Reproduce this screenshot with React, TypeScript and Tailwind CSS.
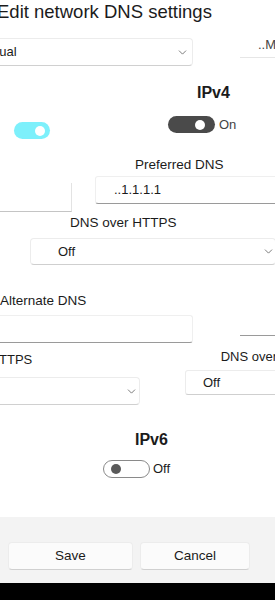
import { ChevronDown } from 'lucide-react'

function Chevron() {
  return <ChevronDown className="h-[13px] w-[13px] text-[#5f5f5f]" strokeWidth={1.5} />
}

export default function App() {
  return (
    <div className="h-[600px] w-[275px] overflow-hidden bg-white text-[#1b1b1b] [font-family:'Liberation_Sans',Arial,sans-serif]">
      {/* title */}
      <div className="h-[30px] -ml-[3px] whitespace-nowrap text-[18.5px] leading-[24px]">Edit network DNS settings</div>

      {/* mode dropdown */}
      <div className="flex h-[42px] items-start">
        <div className="-ml-[40px] mt-[8px] flex h-[28px] w-[233px] shrink-0 items-center rounded-[4px] border border-[#ececec] border-b-[#d0d0d0] pl-[13px] pr-[3px] text-[13px]">
          <span>Manual</span>
          <span className="ml-auto"><Chevron /></span>
        </div>
        <div className="ml-[47px] mt-[3px] flex h-[25px] w-[45px] shrink-0 items-center border-b border-[#e6e6e6] pl-[18px] text-[13px] text-[#444]">..M</div>
      </div>

      {/* IPv4 */}
      <div className="h-[33px] pl-[197px] pt-[11px] text-[16px] font-bold leading-[19px]">IPv4</div>

      {/* toggles */}
      <div className="flex h-[40px] items-start">
        <div className="ml-[14px] mt-[17px] flex h-[17px] w-[36px] shrink-0 items-center justify-end rounded-full bg-[#7df0fb] pr-[5px]">
          <div className="h-[10px] w-[10px] rounded-full bg-white" />
        </div>
        <div className="ml-[118px] mt-[11px] flex h-[17px] w-[47px] shrink-0 items-center justify-end rounded-full bg-[#4a4a4a] pr-[10px]">
          <div className="h-[10px] w-[10px] rounded-full bg-white" />
        </div>
        <span className="ml-[4px] mt-[11px] text-[13px] leading-[17px] text-[#444]">On</span>
      </div>

      {/* preferred */}
      <div className="h-[30px] pl-[135px] pt-[12px] text-[13.5px] leading-[16px]">Preferred DNS</div>
      <div className="flex h-[38px] items-start">
        <div className="mt-[8px] h-[29px] w-[72px] shrink-0 border-r border-b border-[#e3e3e3] border-b-[#c4c4c4]" />
        <div className="ml-[23px] mt-[1px] flex h-[28px] w-[200px] shrink-0 items-center rounded-[3px] border border-[#efefef] border-b-[#9a9a9a] pl-[18px] text-[13px]">..1.1.1.1</div>
      </div>
      <div className="h-[19px] pl-[70px] pt-[2px] text-[13.5px] leading-[16px]">DNS over HTTPS</div>
      <div className="flex h-[40px] items-start">
        <div className="ml-[30px] mt-[6px] flex h-[27px] w-[246px] shrink-0 items-center rounded-[4px] border border-[#ececec] border-b-[#cfcfcf] pl-[27px] text-[13px]">
          <span>Off</span>
          <span className="ml-auto"><Chevron /></span>
        </div>
      </div>

      {/* alternate */}
      <div className="h-[38px] pt-[21px] text-[13.5px] leading-[16px]">Alternate DNS</div>
      <div className="flex h-[38px] items-start">
        <div className="-ml-[10px] mt-[5px] h-[28px] w-[203px] shrink-0 rounded-[3px] border border-[#efefef] border-b-[#9a9a9a]" />
        <div className="ml-[47px] mt-[10px] h-[16px] w-[40px] shrink-0 border-b border-[#9a9a9a]" />
      </div>
      <div className="flex h-[17px] items-start text-[13px] leading-[15px]">
        <span className="-ml-[1px] mt-[4px]">TTPS</span>
        <span className="ml-auto -mr-[2px] mt-[1px] whitespace-nowrap">DNS over</span>
      </div>
      <div className="flex h-[45px] items-start">
        <div className="-ml-[20px] mt-[12px] flex h-[28px] w-[160px] shrink-0 items-center justify-end rounded-[4px] border border-[#ececec] border-b-[#d0d0d0] pr-[1px]">
          <Chevron />
        </div>
        <div className="ml-[45px] mt-[5px] flex h-[25px] w-[95px] shrink-0 items-center rounded-[3px] border border-[#ececec] border-b-[#cfcfcf] pl-[17px] text-[13px]">Off</div>
      </div>

      {/* IPv6 */}
      <div className="h-[40px] pl-[135px] pt-[20px] text-[16px] font-bold leading-[19px]">IPv6</div>
      <div className="flex h-[40px] items-start">
        <div className="ml-[103px] mt-[10px] flex h-[18px] w-[47px] shrink-0 items-center rounded-full border border-[#8a8a8a] pl-[7px]">
          <div className="h-[10px] w-[10px] rounded-full bg-[#5a5a5a]" />
        </div>
        <span className="ml-[3px] mt-[10px] text-[13px] leading-[18px]">Off</span>
      </div>

      <div className="h-[27px]" />

      {/* footer */}
      <div className="flex h-[66px] items-start bg-[#f3f3f3] pt-[25px]">
        <button className="ml-[8px] h-[28px] w-[125px] rounded-[4px] border border-[#ececec] border-b-[#d0d0d0] bg-[#fbfbfb] text-[13.5px]">Save</button>
        <button className="ml-[7px] h-[28px] w-[110px] rounded-[4px] border border-[#ececec] border-b-[#d0d0d0] bg-[#fbfbfb] text-[13.5px]">Cancel</button>
      </div>
      <div className="h-[17px] bg-black" />
    </div>
  )
}
